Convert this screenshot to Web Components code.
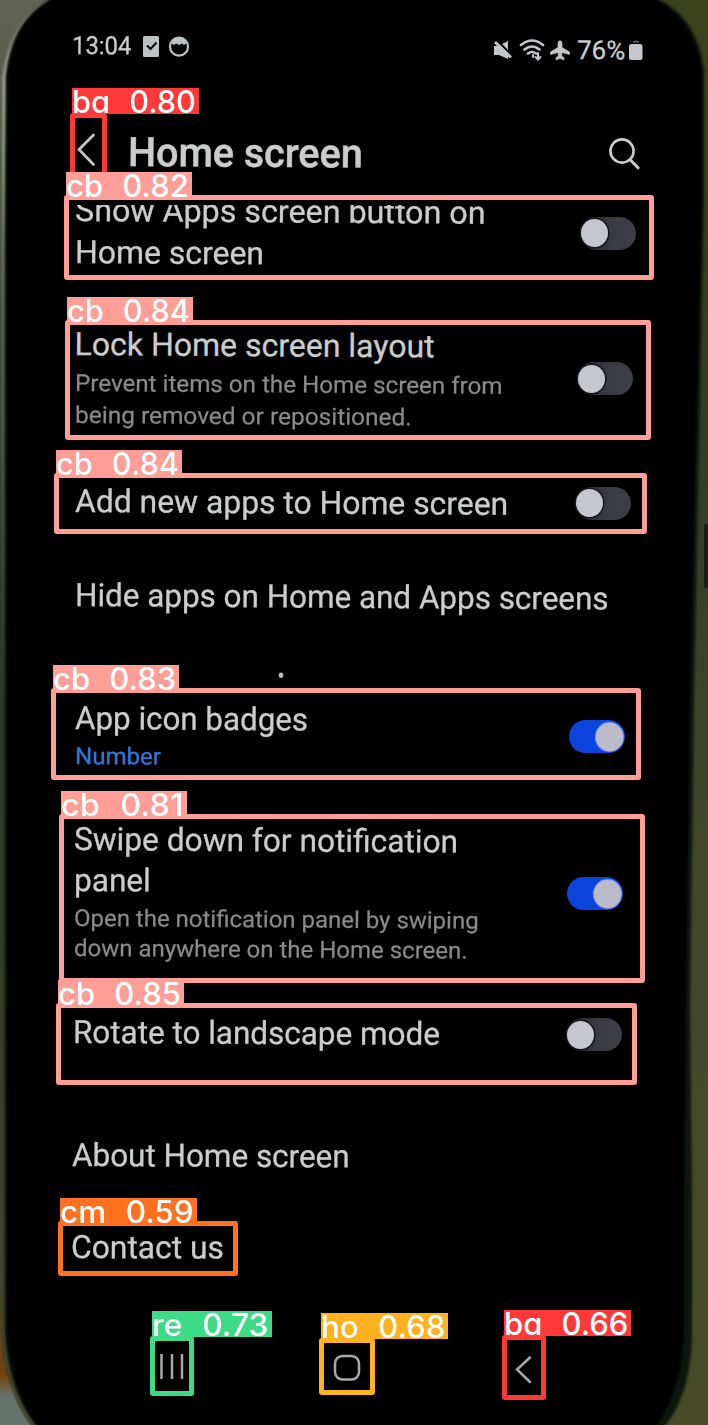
<!DOCTYPE html>
<html lang="en">
<head>
<meta charset="utf-8">
<title>Home screen settings</title>
<style>
html,body{margin:0;padding:0;background:#000}
body{width:708px;height:1425px;overflow:hidden;font-family:Roboto,"Liberation Sans",sans-serif;color:#cbcccc}
</style>
</head>
<body>
<phone-page></phone-page>
<script>
const attach=(el,html)=>{const t=document.createElement('template');t.innerHTML=html;const r=el.attachShadow({mode:'open'});r.append(t.content.cloneNode(true));return r;};

/* One line of text, stretched to the width in "w"; "b" is the distance from its top to its baseline. */
customElements.define('fit-line',class extends HTMLElement{
  connectedCallback(){
    if(this.shadowRoot)return;
    const a=(n,d)=>this.getAttribute(n)||d;
    const r=attach(this,`<style>
      :host{display:flow-root;height:${a('b',30)}px;font-size:${a('size',32)}px;padding-left:${a('x',0)}px;white-space:pre;transform:rotate(${a('tilt',0.38)}deg);transform-origin:0 100%;-webkit-text-stroke:var(--bold,.3px)}
      div{width:max-content;line-height:1.2;margin-top:calc(${a('b',30)}px - ${a('rise','.941')}em);transform-origin:0 50%}
    </style><div><slot></slot></div>`);
    const d=r.querySelector('div'),w=+a('w',0);
    if(w)d.style.transform=`scaleX(${w/d.offsetWidth})`;
  }
});

customElements.define('toggle-switch',class extends HTMLElement{
  connectedCallback(){
    if(this.shadowRoot)return;
    attach(this,`<style>
      :host{display:flex;box-sizing:border-box;width:56px;height:33px;border-radius:17px;padding:2px 2px 2px 1px;align-items:center;background:linear-gradient(90deg,#202127,#393a42 55%,#3d3e46);filter:blur(.4px)}
      :host([on]){justify-content:flex-end;background:#0b44dc;padding-right:2px}
      i{display:block;width:27px;height:28px;border-radius:50%;background:#c6c6ce;box-shadow:0 0 0 1.5px #15151a}
      :host([on]) i{background:#bcbcc9;box-shadow:0 0 1px 1px #8ea3e5}
    </style><i></i>`);
  }
});

customElements.define('setting-row',class extends HTMLElement{
  connectedCallback(){
    if(this.shadowRoot)return;
    const a=(n,d)=>this.getAttribute(n)||d;
    attach(this,`<style>
      :host{display:grid;grid-template-columns:${+a('tx',560)-70}px 1fr;padding-left:70px;height:${a('h',100)}px;box-sizing:border-box;overflow:${this.hasAttribute('clip')?'hidden':'visible'}}
      .t{padding-top:${a('ty',0)}px}
    </style><div><slot></slot></div><div class="t"><slot name="switch"></slot></div>`);
  }
});

customElements.define('status-bar',class extends HTMLElement{
  connectedCallback(){
    if(this.shadowRoot)return;
    attach(this,`<style>
      :host{display:flex;height:88px;box-sizing:border-box;padding:0 64px 0 72px;justify-content:space-between}
      .l,.r{display:flex;align-items:flex-start}
      .l svg{margin-top:34px}.r svg{margin-top:36px}
      svg{display:block;filter:blur(.35px)}
    </style>
    <div class="l"><fit-line b="55" size="25" w="59" style="width:69px" tilt="0.3">13:04</fit-line>
      <svg width="60" height="26" viewBox="0 0 60 26"><rect x="2" y="2" width="16" height="21" rx="1.5" fill="#bcc2c4"/><path d="M6 11.5l3.5 3.5 6-6.5" fill="none" stroke="#111" stroke-width="2.2"/><circle cx="38" cy="12.7" r="9" fill="none" stroke="#bcc2c4" stroke-width="2.2"/><path d="M30 9C31 6 34 3 38 3s7 3 8 6l-3 2-2-1.5-3 1.5-3-1.5-2 1.5Z" fill="#bcc2c4"/></svg></div>
    <div class="r">
      <svg width="85" height="28" viewBox="0 0 85 28"><path d="M2 10h4l10-5v18l-9-4H2Z" fill="#c3c6c9"/><path d="M3.500 3l17 17" stroke="#000" stroke-width="2"/><path d="M3 6l16 15.500" stroke="#c3c6c9" stroke-width="3"/>
      <g fill="none" stroke="#c3c6c9" stroke-width="2.6" stroke-linecap="round"><path d="M29 9q11-9 22 0M32.500 13.500q7.500-6 15 0M36 17.500q4-3 8 0"/><path d="M41 19v2M46 17v6M43.500 21l2.500 2.500 2.500-2.500" stroke-width="2"/></g>
      <path d="M68 4.700q2 0 2 3.300v3.500l7.500 4.500v2.400l-7.500-1.900-.5 3.400 2.500 1.800v2L68 22.500l-4 1.200v-2l2.500-1.800-.5-3.400-7.500 1.900V16l7.500-4.500V8q0-3.300 2-3.300Z" fill="#c3c6c9" stroke="#c3c6c9" stroke-width=".7"/></svg>
      <fit-line b="59" size="26" w="48" style="width:51px" tilt="0.3">76%</fit-line>
      <svg width="16" height="28" viewBox="0 0 16 28"><path d="M5 6.500q3-2 6 0" stroke="#695756" fill="none" stroke-width="2"/><rect x="1" y="8" width="13.500" height="16" rx="2.500" fill="#c5c7cc"/></svg>
    </div>`);
  }
});

customElements.define('title-bar',class extends HTMLElement{
  connectedCallback(){
    if(this.shadowRoot)return;
    attach(this,`<style>
      :host{display:flex;height:117px;box-sizing:border-box;padding:0 66px 0 72px;align-items:flex-start}
      .back{margin-top:42px;width:56px}.find{margin:46px 0 0 auto}
      fit-line{font-weight:500;--bold:.5px}svg{display:block;filter:blur(.3px)}
    </style>
    <div class="back"><svg width="30" height="40" viewBox="0 0 30 40"><path d="M21.500 5L7 19.500l14.500 15" fill="none" stroke="#c5c6c6" stroke-width="2.700" stroke-linecap="round"/></svg></div>
    <fit-line b="78.500" size="40.500" w="235" tilt="0.35">Home screen</fit-line>
    <div class="find"><svg width="36" height="38" viewBox="0 0 36 38"><circle cx="16" cy="17" r="11.600" fill="none" stroke="#ccc" stroke-width="2.600"/><path d="M24.500 26l7.500 7.800" stroke="#ccc" stroke-width="3" stroke-linecap="round"/></svg></div>`);
  }
});

customElements.define('nav-keys',class extends HTMLElement{
  connectedCallback(){
    if(this.shadowRoot)return;
    attach(this,`<style>
      :host{display:grid;grid-template-columns:175px 182px 30px;padding:59px 0 0 157px}
      svg{display:block;filter:blur(.3px);fill:none;stroke:#aaa7a9;stroke-width:2.500}
    </style>
    <svg width="30" height="36"><path d="M4.500 5v25M15 5v25M25 5v25"/></svg>
    <svg width="30" height="36" viewBox="0 0 30 36"><rect x="3" y="7" width="24" height="23.500" rx="7.500"/></svg>
    <svg width="30" height="36"><path d="M16 8.500L3 20.500l13 12.500" stroke-linecap="round"/></svg>`);
  }
});

/* Detection frame with its tag, laid over the screen. */
customElements.define('detect-box',class extends HTMLElement{
  connectedCallback(){
    if(this.shadowRoot)return;
    const [x,y,r,b]=this.getAttribute('box').split(' ').map(Number),lw=+this.getAttribute('lw'),lh=+(this.getAttribute('lh')||25);
    attach(this,`<style>
      :host{position:absolute;left:${x}px;top:${y}px;width:${r-x}px;height:${b-y}px;box-sizing:border-box;border:5px solid var(--c);border-radius:3px;color:#fff;font-family:Inter,"DejaVu Sans",sans-serif;font-weight:500;font-feature-settings:"cv11"}
      .tag{position:absolute;left:-3px;top:${-lh-3}px;width:${lw}px;height:26px;background:var(--c);word-spacing:11px;--bold:0}
    </style><div class="tag"><fit-line b="24.700" size="31" rise=".964" tilt="0.001" w="${lw-3}"><slot></slot></fit-line></div>`);
  }
});

customElements.define('phone-page',class extends HTMLElement{
  connectedCallback(){
    attach(this,`<style>
      :host{display:block;position:relative;width:708px;height:1425px;overflow:hidden}
      .bg{position:absolute;inset:0;display:block}
      main{position:relative;display:flex;flex-direction:column}
      .sub{color:#8b8b8d;--bold:.2px}.num{color:#2f78d8}
    </style>
    <svg class="bg" width="708" height="1425" viewBox="0 0 708 1425">
      <defs>
        <linearGradient id="l" x2="0" y2="1"><stop offset="0" stop-color="#626455"/><stop offset=".12" stop-color="#505443"/><stop offset=".45" stop-color="#303b28"/><stop offset=".9" stop-color="#4b4c30"/><stop offset=".965" stop-color="#70420f"/><stop offset=".98" stop-color="#65736a"/></linearGradient>
        <linearGradient id="r" x2="0" y2="1"><stop offset="0" stop-color="#3b421b"/><stop offset=".3" stop-color="#303c24"/><stop offset=".6" stop-color="#42472c"/><stop offset="1" stop-color="#474b27"/></linearGradient>
        <linearGradient id="e" x2="0" y2="1"><stop offset="0" stop-color="#586050"/><stop offset=".06" stop-color="#a8b2a0"/><stop offset=".2" stop-color="#6a7561"/><stop offset=".5" stop-color="#2f3c2c"/><stop offset="1" stop-color="#4c4e32"/></linearGradient>
        <filter id="b" x="-10%" width="120%"><feGaussianBlur stdDeviation="1"/></filter>
      </defs>
      <rect width="354" height="1425" fill="url(#l)"/><rect x="354" width="354" height="1425" fill="url(#r)"/>
      <path d="M50 -2C24 14 9 34 4 72L2 250V1330Q5 1390 33 1427H664Q691 1395 692 1335V1200L690 1010 694 700 699 440 704 200V70Q698 17 656 -2Z" fill="#11150c" filter="url(#b)"/>
      <path d="M50 -2C24 14 9 34 4 76L3 250V1330Q6 1390 35 1427" fill="none" stroke="url(#e)" stroke-width="3" filter="url(#b)"/>
      <path d="M54 -2C27 14 13 34 8 76L7 250V1330Q11 1390 38 1427H656Q683 1388 684 1330V1200L686 1010 690 700 696 440 702 200V70Q694 17 652 -2Z" fill="#000" filter="url(#b)"/>
      <path d="M704 524h4v64h-4Z" fill="#1b2016"/>
      <ellipse cx="281" cy="675.300" rx="2.300" ry="2.700" fill="#bbb"/>
    </svg>
    <main>
      <status-bar></status-bar>
      <title-bar></title-bar>
      <setting-row h="95" tx="580" ty="11.500" clip>
        <fit-line x="5" b="16" w="411">Show Apps screen button on</fit-line>
        <fit-line x="5" b="42" w="188.500">Home screen</fit-line>
        <toggle-switch slot="switch"></toggle-switch>
      </setting-row>
      <setting-row h="160" tx="577" ty="62">
        <fit-line x="4.500" b="55.500" w="360">Lock Home screen layout</fit-line>
        <fit-line class="sub" x="5" b="35.500" size="23.500" w="428">Prevent items on the Home screen from</fit-line>
        <fit-line class="sub" x="5" b="32" size="23.500" w="337">being removed or repositioned.</fit-line>
        <toggle-switch slot="switch"></toggle-switch>
      </setting-row>
      <setting-row h="90" tx="574.500" ty="26.500">
        <fit-line x="4.500" b="52" w="433">Add new apps to Home screen</fit-line>
        <toggle-switch slot="switch"></toggle-switch>
      </setting-row>
      <setting-row h="120" tx="660">
        <fit-line x="4.500" b="56" w="534">Hide apps on Home and Apps screens</fit-line>
      </setting-row>
      <setting-row h="130" tx="569" ty="50">
        <fit-line x="4.500" b="59.500" w="233">App icon badges</fit-line>
        <fit-line class="num" x="4.500" b="34.500" size="23.500" w="86">Number</fit-line>
        <toggle-switch slot="switch" on></toggle-switch>
      </setting-row>
      <setting-row h="200" tx="567" ty="77">
        <fit-line x="3.500" b="50" w="384">Swipe down for notification</fit-line>
        <fit-line x="3.500" b="41" w="77">panel</fit-line>
        <fit-line class="sub" x="3.500" b="35" size="23.500" w="405">Open the notification panel by swiping</fit-line>
        <fit-line class="sub" x="3.500" b="30.500" size="23.500" w="394">down anywhere on the Home screen.</fit-line>
        <toggle-switch slot="switch" on></toggle-switch>
      </setting-row>
      <setting-row h="100" tx="566" ty="18">
        <fit-line x="3" b="43" w="366.500" tilt=".3">Rotate to landscape mode</fit-line>
        <toggle-switch slot="switch"></toggle-switch>
      </setting-row>
      <setting-row h="110" tx="600"><fit-line x="1.500" b="66.500" w="278" tilt=".3">About Home screen</fit-line></setting-row>
      <setting-row h="80" tx="600"><fit-line x="0.500" b="48.500" w="153" tilt=".2">Contact us</fit-line></setting-row>
      <nav-keys></nav-keys>
    </main>
    <detect-box style="--c:#ff3838" box="70 113 107 190" lw="127" lh="27">ba 0.80</detect-box>
    <detect-box style="--c:#ff9d97" box="64 195 654 280" lw="126">cb 0.82</detect-box>
    <detect-box style="--c:#ff9d97" box="65 320 651 440" lw="126">cb 0.84</detect-box>
    <detect-box style="--c:#ff9d97" box="54 473 647 534" lw="126">cb 0.84</detect-box>
    <detect-box style="--c:#ff9d97" box="51 688 641 780" lw="126">cb 0.83</detect-box>
    <detect-box style="--c:#ff9d97" box="59 814 645 983" lw="126">cb 0.81</detect-box>
    <detect-box style="--c:#ff9d97" box="56 1003 637 1085" lw="126">cb 0.85</detect-box>
    <detect-box style="--c:#ff701f" box="58 1221 238 1276" lw="137">cm 0.59</detect-box>
    <detect-box style="--c:#3ddb86" box="150 1336 194 1396" lw="120" lh="27">re 0.73</detect-box>
    <detect-box style="--c:#ffb21d" box="319 1338 375 1395" lw="127" lh="27">ho 0.68</detect-box>
    <detect-box style="--c:#ff3838" box="502 1335 546 1400" lw="127" lh="27">ba 0.66</detect-box>`);
  }
});
</script>
</body>
</html>
